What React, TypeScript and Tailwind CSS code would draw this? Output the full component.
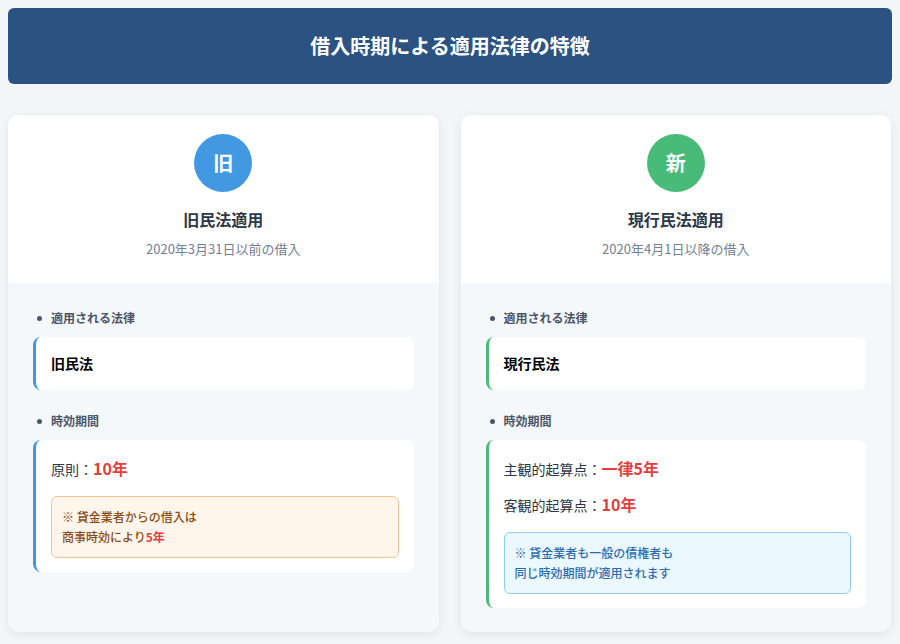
import React from 'react';

const font = { fontFamily: '"Noto Sans CJK JP", "Noto Sans", sans-serif' };

const Label: React.FC<{ text: string }> = ({ text }) => (
  <div className="flex items-center gap-[9px] text-[12px] font-bold text-[#4a5568] mb-[10px] pl-[4px]">
    <span className="w-[5px] h-[5px] rounded-full bg-[#4a5568]" />
    {text}
  </div>
);

const Card: React.FC<{
  badge: string; badgeColor: string; title: string; sub: string; accent: string; law: string; children: React.ReactNode;
}> = ({ badge, badgeColor, title, sub, accent, law, children }) => (
  <div className="flex-1 bg-[#f5f8fb] rounded-[10px] shadow-[0_2px_10px_rgba(0,0,0,0.08)] overflow-hidden flex flex-col">
    <div className="bg-white h-[168px] flex flex-col items-center pt-[19px]">
      <div className={`w-[58px] h-[58px] rounded-full ${badgeColor} flex items-center justify-center text-white text-[20px] font-bold`}>{badge}</div>
      <div className="mt-[15px] text-[16px] font-bold text-[#2d3748]">{title}</div>
      <div className="mt-[8px] text-[13px] text-[#718096]">{sub}</div>
    </div>
    <div className="px-[25px] pt-[26px] pb-[24px]">
      <Label text="適用される法律" />
      <div className={`bg-white rounded-[8px] border-l-[3px] ${accent} h-[53px] flex items-center px-[15px] text-[14px] font-bold text-black`}>{law}</div>
      <div className="h-[22px]" />
      <Label text="時効期間" />
      <div className={`bg-white rounded-[8px] border-l-[3px] ${accent} px-[15px] pt-[16px] pb-[14px]`}>{children}</div>
    </div>
  </div>
);

export default function App() {
  return (
    <div className="min-h-screen bg-[#f3f6f9] px-[8px] pt-[8px] pb-[12px]" style={font}>
      <div className="bg-[#2c5282] rounded-[6px] h-[76px] flex items-center justify-center text-white text-[20px] font-bold">
        借入時期による適用法律の特徴
      </div>
      <div className="flex gap-[22px] mt-[31px] pr-[1px]">
        <Card badge="旧" badgeColor="bg-[#4299e1]" title="旧民法適用" sub="2020年3月31日以前の借入" accent="border-[#4299e1]" law="旧民法">
          <div className="text-[14px] text-[#2d3748]">原則：<span className="text-[#e53e3e] text-[16px] font-bold">10年</span></div>
          <div className="mt-[16px] bg-[#fff5eb] border border-[#f6c58f] rounded-[6px] px-[10px] py-[10px] text-[12px] leading-[20px] text-[#8a4b14] font-medium">
            ※ 貸金業者からの借入は<br />商事時効により<span className="text-[#e53e3e] font-bold">5年</span>
          </div>
        </Card>
        <Card badge="新" badgeColor="bg-[#48bb78]" title="現行民法適用" sub="2020年4月1日以降の借入" accent="border-[#48bb78]" law="現行民法">
          <div className="text-[14px] text-[#2d3748]">主観的起算点：<span className="text-[#e53e3e] text-[16px] font-bold">一律5年</span></div>
          <div className="mt-[12px] text-[14px] text-[#2d3748]">客観的起算点：<span className="text-[#e53e3e] text-[16px] font-bold">10年</span></div>
          <div className="mt-[16px] bg-[#ebf8ff] border border-[#90cdf4] rounded-[6px] px-[10px] py-[10px] text-[12px] leading-[20px] text-[#2b6cb0] font-medium">
            ※ 貸金業者も一般の債権者も<br />同じ時効期間が適用されます
          </div>
        </Card>
      </div>
    </div>
  );
}
